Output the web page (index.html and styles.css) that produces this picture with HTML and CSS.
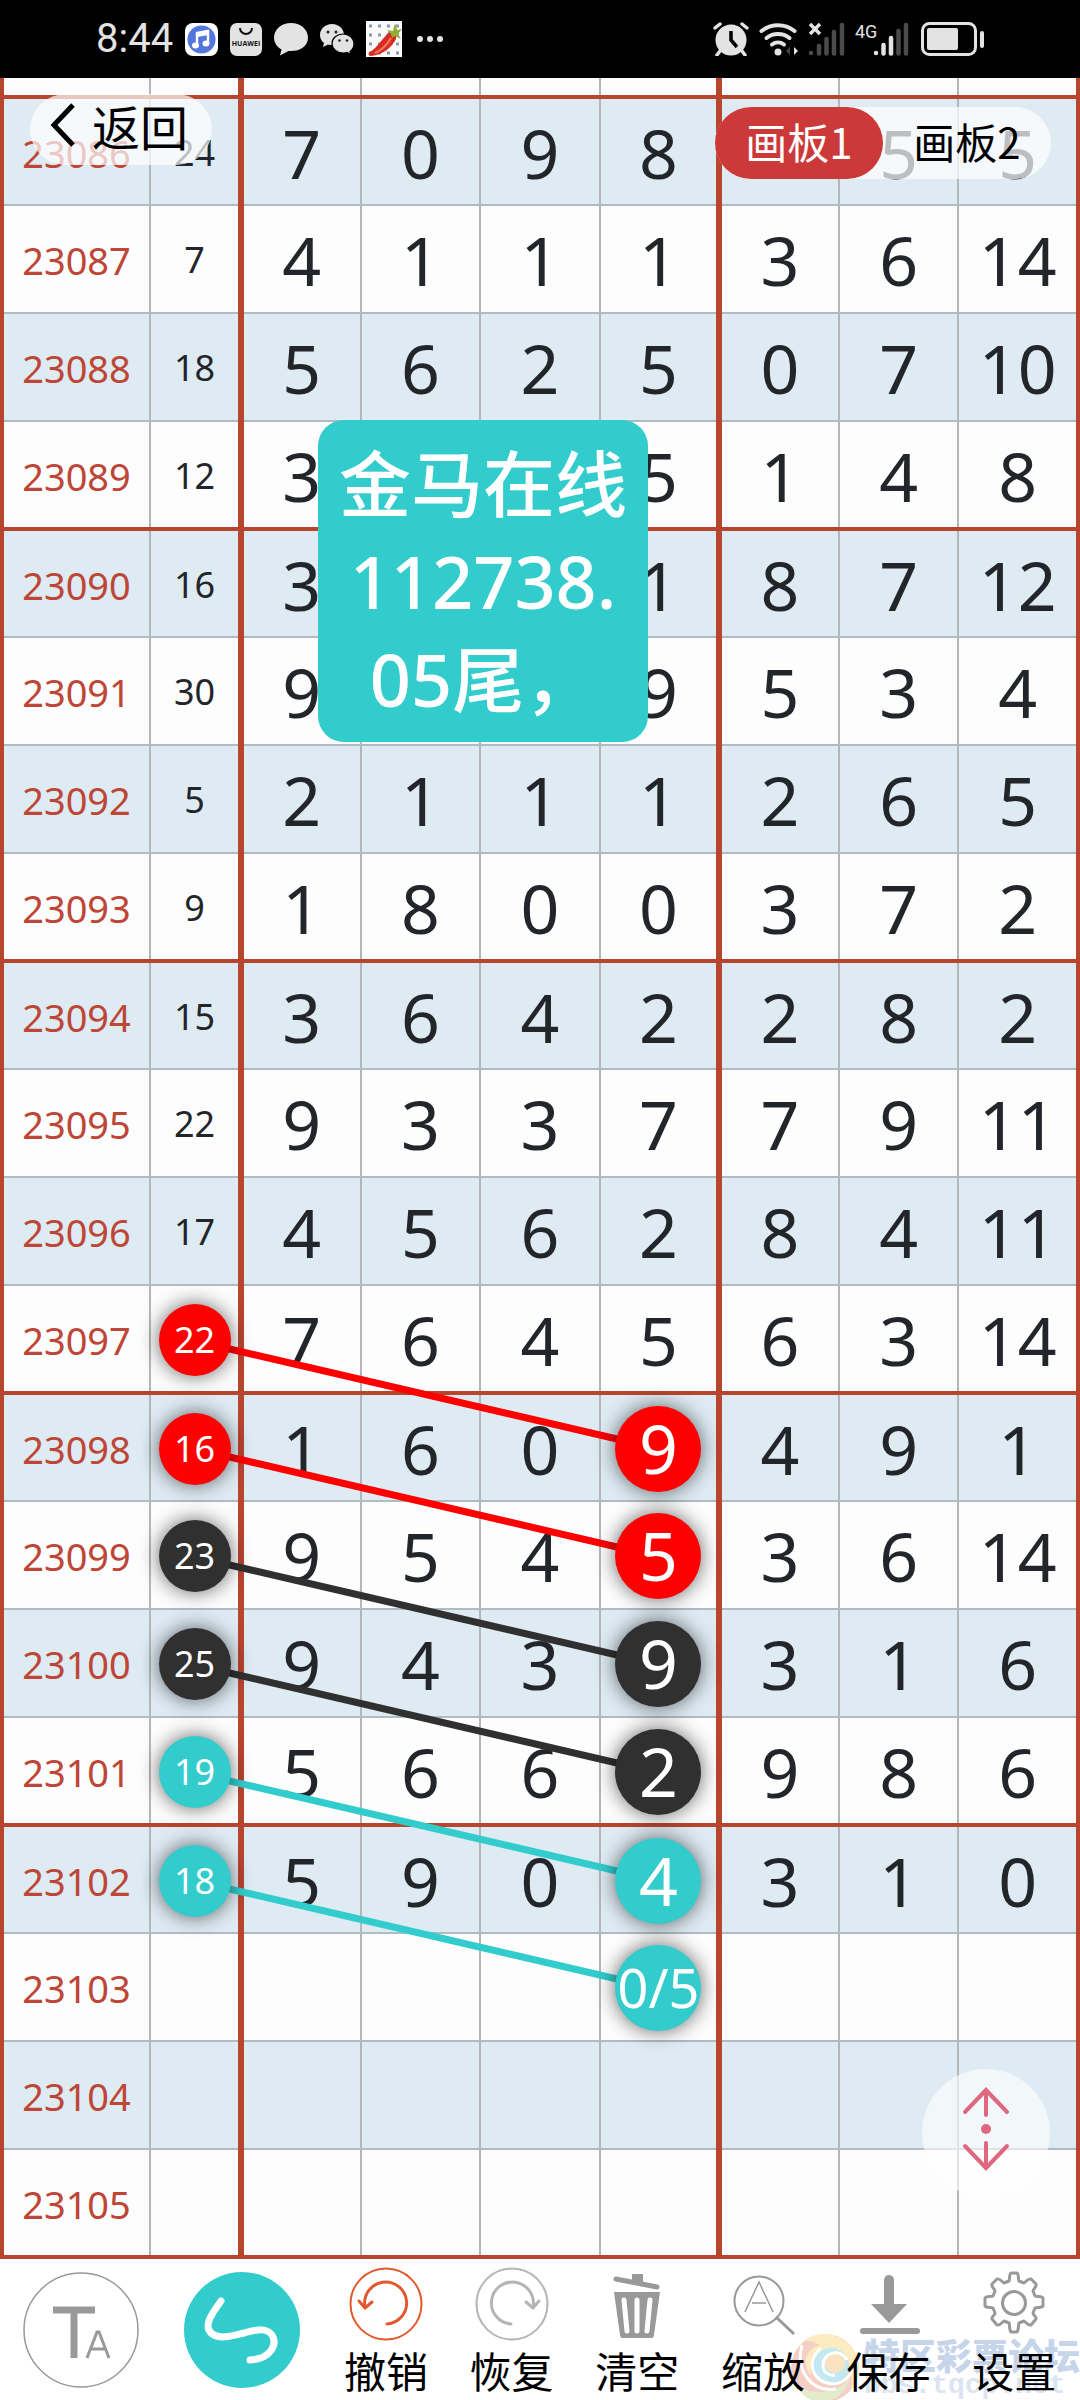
FILE: index.html
```html
<!DOCTYPE html>
<html lang="zh-CN">
<head>
  <meta charset="UTF-8">
  <meta name="viewport" content="width=device-width, initial-scale=1">
  <title>画板</title>
  <link rel="stylesheet" href="styles.css">
</head>
<body>

  <header class="status-bar">
    <div class="status-left">
      <span class="time">8:44</span>
      <svg width="33" height="33" viewBox="0 0 33 33">
        <rect width="33" height="33" rx="8" fill="#fff"/>
        <circle cx="16.500" cy="16.500" r="14" fill="#5377dc"/>
        <path d="M12 22V10l11-2v12" fill="none" stroke="#fff" stroke-width="2.400"/>
        <path d="M12 12.500l11-2" stroke="#fff" stroke-width="3"/>
        <ellipse cx="10.500" cy="22.500" rx="3.500" ry="3" fill="#fff"/>
        <ellipse cx="21" cy="20.500" rx="3.500" ry="3" fill="#fff"/>
      </svg>
      <svg width="32" height="33" viewBox="0 0 32 33">
        <rect width="32" height="33" rx="7" fill="#e3e3e3"/>
        <path d="M10 5a6 6 0 0 0 12 0" fill="none" stroke="#111" stroke-width="2"/>
        <text class="badge-text" x="16" y="23" text-anchor="middle">HUAWEI</text>
      </svg>
      <svg width="34" height="34" viewBox="0 0 34 34">
        <path d="M17 1C8 1 0 7 0 15.500c0 5 3 9.500 7.500 12L6 33.500l8.500-4.500C25 30 34 24.500 34 15.500 34 7 26 1 17 1z" fill="#e3e3e3"/>
      </svg>
      <svg width="34" height="32" viewBox="0 0 34 32">
        <path d="M12 1C5 1 0 6 0 12c0 3.500 1.500 6 4 8l-1 4 5-2.500c8 2 16-2 16-9.500C24 6 19 1 12 1z" fill="#e3e3e3"/>
        <path d="M23 11c-6 0-11 4-11 9.500S17 30 23 30c1.500 0 3 0 4-.500l4 2-1-3c2.500-2 4-4.500 4-8C34 15 29 11 23 11z" fill="#e3e3e3" stroke="#000" stroke-width="1.200"/>
        <g fill="#222"><circle cx="8" cy="9" r="1.500"/><circle cx="16" cy="9" r="1.500"/><circle cx="19.500" cy="17.500" r="1.300"/><circle cx="27" cy="17.500" r="1.300"/></g>
      </svg>
      <svg width="36" height="36" viewBox="0 0 36 36">
        <rect width="36" height="36" fill="#fafafa"/>
        <g fill="none" stroke="#8a9ab0" stroke-width="3" stroke-dasharray="3 6"><path d="M3 5h33M3 14h33M3 23h33M3 32h33"/></g>
        <path d="M23 11c5 0 8 3 7 7-4 8-13 16-25 17-3 0-3-3-1-4 8-5 12-13 19-20z" fill="#d62c22"/>
        <path d="M9 32c7-3 12-8 16-15" fill="none" stroke="#f47a62" stroke-width="2"/>
        <path d="M21 9l6 1 2-8 2 7 5-1-4 5 3 5-6-3-3 2-1-4z" fill="#8eae35"/>
      </svg>
      <svg width="36" height="8" viewBox="0 0 36 8">
        <g fill="#e3e3e3"><circle cx="6" cy="4" r="3"/><circle cx="16" cy="4" r="3"/><circle cx="26" cy="4" r="3"/></g>
      </svg>
    </div>
    <div class="status-right">
      <svg width="36" height="34" viewBox="0 0 36 34">
        <circle cx="18" cy="18" r="15.500" fill="#e3e3e3"/>
        <path d="M2 6l5-4M34 6l-5-4M7 29l-3 4M29 29l3 4" stroke="#e3e3e3" stroke-width="3.500" stroke-linecap="round"/>
        <path d="M18 9v9l6 7" fill="none" stroke="#000" stroke-width="3.500"/>
      </svg>
      <svg width="39" height="34" viewBox="0 0 39 34">
        <g fill="none" stroke="#e3e3e3" stroke-width="4" stroke-linecap="round">
          <path d="M2.500 9a27 27 0 0 1 33 0"/><path d="M7.500 16a19 19 0 0 1 23 0"/><path d="M13 22.500a10 10 0 0 1 12 0"/>
        </g>
        <circle cx="19" cy="30" r="3.500" fill="#e3e3e3"/>
        <path d="M31 25v8l-4-4z" fill="#444"/><path d="M35 25l4 4-4 4z" fill="#e3e3e3"/>
      </svg>
      <svg width="37" height="34" viewBox="0 0 37 34">
        <path d="M2 2l10 10M12 2l-10 10" stroke="#e3e3e3" stroke-width="3.500"/>
        <g stroke="#4b4b4b" stroke-width="4.500" stroke-linecap="round"><path d="M3 31v0M11 24v7.500M18.500 17v14.500M26 10v21.500M34 3v28.500"/></g>
      </svg>
      <svg width="56" height="34" viewBox="0 0 56 34">
        <text class="net-text" x="0" y="16">4G</text>
        <g stroke-width="4.500" stroke-linecap="round"><path d="M21 31v0M28.500 23v8.500M36 16v15.500" stroke="#e3e3e3"/><path d="M43.500 9v22.500M51 3v28.500" stroke="#4b4b4b"/></g>
      </svg>
      <svg width="63" height="34" viewBox="0 0 63 34">
        <rect x="1.500" y="1.500" width="53" height="31" rx="7" fill="none" stroke="#e3e3e3" stroke-width="3"/>
        <rect x="6" y="6" width="31" height="22" rx="2" fill="#e3e3e3"/>
        <rect x="59" y="9" width="4" height="17" rx="2" fill="#e3e3e3"/>
      </svg>
    </div>
  </header>

  <main class="board">
    <table class="chart">
      <colgroup>
        <col class="col-issue"><col class="col-sum">
        <col><col><col><col><col><col><col>
      </colgroup>
      <tbody>
        <tr class="cut group-end"><th></th><td></td><td></td><td></td><td></td><td></td><td></td><td></td><td></td></tr>
        <tr><th scope="row">23086</th><td>24</td><td>7</td><td>0</td><td>9</td><td>8</td><td></td><td>5</td><td>5</td></tr>
        <tr><th scope="row">23087</th><td>7</td><td>4</td><td>1</td><td>1</td><td>1</td><td>3</td><td>6</td><td>14</td></tr>
        <tr><th scope="row">23088</th><td>18</td><td>5</td><td>6</td><td>2</td><td>5</td><td>0</td><td>7</td><td>10</td></tr>
        <tr class="group-end"><th scope="row">23089</th><td>12</td><td>3</td><td></td><td></td><td>5</td><td>1</td><td>4</td><td>8</td></tr>
        <tr><th scope="row">23090</th><td>16</td><td>3</td><td></td><td></td><td>1</td><td>8</td><td>7</td><td>12</td></tr>
        <tr><th scope="row">23091</th><td>30</td><td>9</td><td></td><td></td><td>9</td><td>5</td><td>3</td><td>4</td></tr>
        <tr><th scope="row">23092</th><td>5</td><td>2</td><td>1</td><td>1</td><td>1</td><td>2</td><td>6</td><td>5</td></tr>
        <tr class="group-end"><th scope="row">23093</th><td>9</td><td>1</td><td>8</td><td>0</td><td>0</td><td>3</td><td>7</td><td>2</td></tr>
        <tr><th scope="row">23094</th><td>15</td><td>3</td><td>6</td><td>4</td><td>2</td><td>2</td><td>8</td><td>2</td></tr>
        <tr><th scope="row">23095</th><td>22</td><td>9</td><td>3</td><td>3</td><td>7</td><td>7</td><td>9</td><td>11</td></tr>
        <tr><th scope="row">23096</th><td>17</td><td>4</td><td>5</td><td>6</td><td>2</td><td>8</td><td>4</td><td>11</td></tr>
        <tr class="group-end"><th scope="row">23097</th><td><span class="ball small red">22</span></td><td>7</td><td>6</td><td>4</td><td>5</td><td>6</td><td>3</td><td>14</td></tr>
        <tr><th scope="row">23098</th><td><span class="ball small red">16</span></td><td>1</td><td>6</td><td>0</td><td><span class="ball red">9</span></td><td>4</td><td>9</td><td>1</td></tr>
        <tr><th scope="row">23099</th><td><span class="ball small black">23</span></td><td>9</td><td>5</td><td>4</td><td><span class="ball red">5</span></td><td>3</td><td>6</td><td>14</td></tr>
        <tr><th scope="row">23100</th><td><span class="ball small black">25</span></td><td>9</td><td>4</td><td>3</td><td><span class="ball black">9</span></td><td>3</td><td>1</td><td>6</td></tr>
        <tr class="group-end"><th scope="row">23101</th><td><span class="ball small teal">19</span></td><td>5</td><td>6</td><td>6</td><td><span class="ball black">2</span></td><td>9</td><td>8</td><td>6</td></tr>
        <tr><th scope="row">23102</th><td><span class="ball small teal">18</span></td><td>5</td><td>9</td><td>0</td><td><span class="ball teal">4</span></td><td>3</td><td>1</td><td>0</td></tr>
        <tr><th scope="row">23103</th><td></td><td></td><td></td><td></td><td><span class="ball teal pair">0/5</span></td><td></td><td></td><td></td></tr>
        <tr><th scope="row">23104</th><td></td><td></td><td></td><td></td><td></td><td></td><td></td><td></td></tr>
        <tr class="group-end"><th scope="row">23105</th><td></td><td></td><td></td><td></td><td></td><td></td><td></td><td></td></tr>
      </tbody>
    </table>

    <!-- trend lines, one unit per pixel of the chart -->
    <svg class="lines" viewBox="0 0 1080 2181" preserveAspectRatio="none">
      <g fill="none" stroke-width="7">
        <path d="M195 1263L660 1371M195 1371L660 1479" stroke="#ff0000"/>
        <path d="M195 1479L660 1587M195 1587L660 1695" stroke="#303030"/>
        <path d="M195 1695L660 1803M195 1803L660 1911" stroke="#32cccd"/>
      </g>
    </svg>

    <div class="note">金马在线<br>112738.<br>05尾，</div>

    <button class="back" type="button">
      <svg width="26" height="46" viewBox="0 0 26 46"><path d="M23 3L4 23l19 20" fill="none" stroke="#000" stroke-width="5"/></svg>
      返回
    </button>

    <div class="boards">
      <button class="active" type="button">画板1</button>
      <button type="button">画板2</button>
    </div>

    <button class="scroller" type="button" aria-label="滚动">
      <svg width="48" height="84" viewBox="0 0 48 84">
        <g fill="none" stroke="#dd6880" stroke-width="4" stroke-linecap="round">
          <path d="M3 25L24 3l21 22M24 3v25M3 59l21 22 21-22M24 81V56"/>
        </g>
        <circle cx="24" cy="42" r="5" fill="#dd6880"/>
      </svg>
    </button>
  </main>

  <footer class="toolbar">
    <button class="mode" type="button" aria-label="文字">
      <svg width="116" height="116" viewBox="0 0 116 116">
        <circle cx="58" cy="58" r="57" fill="#fff" stroke="#999" stroke-width="1.500"/>
        <path d="M30 38h42M51 38v48" fill="none" stroke="#999" stroke-width="7"/>
        <path d="M64 86l10-26h2l10 26M67 77h16" fill="none" stroke="#999" stroke-width="3"/>
      </svg>
    </button>
    <button class="mode" type="button" aria-label="画线">
      <svg width="116" height="116" viewBox="0 0 116 116">
        <circle cx="58" cy="58" r="58" fill="#32cccd"/>
        <path d="M37 29C26 44 20 54 27 61c8 7 21 3 33 0 14-4 23-5 28 2 6 10-2 24-22 25" fill="none" stroke="#fff" stroke-width="7" stroke-linecap="round"/>
      </svg>
    </button>
    <button class="tool" type="button">
      <svg width="74" height="74" viewBox="0 0 74 74">
        <g fill="none" stroke="#e2582f" stroke-width="2" stroke-linecap="round" stroke-linejoin="round">
          <circle cx="37" cy="37" r="35.500"/>
          <path d="M38 57a21 21 0 1 0-22-17" stroke-width="3"/><path d="M10 34l6 7 7-6" stroke-width="3"/>
        </g>
      </svg>
      撤销
    </button>
    <button class="tool" type="button">
      <svg width="74" height="74" viewBox="0 0 74 74">
        <g fill="none" stroke="#b5b5b5" stroke-width="2" stroke-linecap="round" stroke-linejoin="round">
          <circle cx="37" cy="37" r="35.500"/>
          <path d="M36 57a21 21 0 1 1 22-17" stroke-width="3"/><path d="M64 34l-6 7-7-6" stroke-width="3"/>
        </g>
      </svg>
      恢复
    </button>
    <button class="tool" type="button">
      <svg width="74" height="74" viewBox="0 0 74 74">
        <path d="M16 12l41 8" stroke="#999" stroke-width="5" stroke-linecap="round"/>
        <path d="M32 7h11v9l-11-2z" fill="#999"/>
        <path d="M14 25h46l-6 43q0 3-3 3H23q-3 0-3-3z" fill="#999"/>
        <path d="M24 33l3 31M37 33v31M50 33l-3 31" stroke="#fff" stroke-width="5" stroke-linecap="round"/>
      </svg>
      清空
    </button>
    <button class="tool" type="button">
      <svg width="74" height="74" viewBox="0 0 74 74">
        <g fill="none" stroke="#999" stroke-width="2">
          <circle cx="33" cy="34" r="24.500"/>
          <path d="M19 45l14-30 14 30M26 36h14" stroke-width="1.500"/><path d="M50 50l18 17" stroke-width="3"/>
        </g>
      </svg>
      缩放
    </button>
    <button class="tool" type="button">
      <svg width="74" height="74" viewBox="0 0 74 74">
        <path d="M37 13v30" stroke="#999" stroke-width="10" stroke-linecap="round"/>
        <path d="M19 37h36L37 56z" fill="#999"/>
        <path d="M11 64h54" stroke="#999" stroke-width="6" stroke-linecap="round"/>
      </svg>
      保存
    </button>
    <button class="tool" type="button">
      <svg width="74" height="74" viewBox="0 0 74 74">
        <g transform="translate(2 0)" fill="none" stroke="#999" stroke-width="3" stroke-linejoin="round">
          <circle cx="35" cy="36" r="11.500"/>
          <path d="M30 14c1-2 0-7 2-8h6c2 1 1 6 2 8l5 2c2-1 4-5 7-4l5 5c1 3-3 5-3 7l2 5c2 1 7 0 8 2v8c-1 2-6 1-8 2l-2 5c0 2 4 4 3 6l-5 6c-3 1-5-3-7-4l-5 2c-1 2 0 7-2 9h-6c-2-2-1-7-2-9l-5-2c-2 1-4 5-7 4l-5-6c-1-2 3-4 3-6l-2-5c-2-1-7 0-8-2v-8c1-2 6-1 8-2l2-5c0-2-4-4-3-7l5-5c3-1 5 3 7 4z"/>
        </g>
      </svg>
      设置
    </button>

    <div class="forum">
      <svg width="70" height="70" viewBox="0 0 70 70">
        <circle cx="35" cy="35" r="34" fill="#f0b6a8"/>
        <path d="M14 8C30-5 58 0 67 24c4 14 0 25-6 33C66 36 52 20 37 20c-14 0-20 14-15 24C10 30 16 16 30 12 22 8 18 7 14 8z" fill="#fbe2a0"/>
        <path d="M6 52c18 12 44 8 54-8-3 16-18 26-30 25-12-1-20-9-24-17z" fill="#d3e3b0"/>
        <circle cx="41" cy="33" r="18" fill="#a5dcea"/>
        <circle cx="45" cy="30" r="10" fill="#f9d5a0"/>
        <path d="M12 12C5 38 22 60 46 56M31 15C14 30 24 50 42 51c11 0 20-8 20-18M57 27c-6-12-24-8-24 5 0 8 6 11 12 10" fill="none" stroke="#fff" stroke-width="3"/>
      </svg>
      <div>
        <strong>特区彩票论坛</strong>
        <span>bbs.tqcp.net</span>
      </div>
    </div>
  </footer>

</body>
</html>
```
FILE: styles.css
```css
* {
  box-sizing: border-box;
}

body {
  margin: 0;
  background: #fff;
  color: #22252a;
  font-family: "Noto Sans", "Noto Sans CJK SC", sans-serif;
}

button {
  margin: 0;
  padding: 0;
  border: none;
  background: none;
  color: #000;
  font-family: "Noto Sans CJK SC", sans-serif;
  cursor: pointer;
}

svg {
  display: block;
  flex: none;
}

/* status bar */
.status-bar {
  display: flex;
  justify-content: space-between;
  align-items: center;
  height: 78px;
  padding: 0 96px;
  background: #000;
  color: #e3e3e3;
}

.status-left,
.status-right {
  display: flex;
  align-items: center;
  gap: 12px;
}

.status-right {
  gap: 10px;
}

.time {
  font-family: Roboto, sans-serif;
  font-size: 40px;
  line-height: 48px;
}

.badge-text {
  font-family: "Open Sans", sans-serif;
  font-size: 7px;
  font-weight: bold;
  fill: #111;
}

.net-text {
  font-family: Roboto, sans-serif;
  font-size: 18px;
  fill: #e3e3e3;
}

/* chart */
.board {
  position: relative;
}

.chart {
  width: 100%;
  table-layout: fixed;
  border-collapse: collapse;
  border-left: 4px solid #b8452e;
  border-right: 4px solid #b8452e;
}

.col-issue {
  width: 148px;
}

.col-sum {
  width: 91px;
}

.chart tr {
  height: 108px;
  background: #fdfdfd;
}

.chart tr:nth-child(even) {
  background: #deebf3;
}

.chart tr.cut {
  height: 19px;
}

.chart th,
.chart td {
  padding: 2px 0 0;
  border-right: 2px solid #b3b7ba;
  border-bottom: 2px solid #aebdc2;
  text-align: center;
  vertical-align: middle;
  font-size: 68px;
  font-weight: normal;
  line-height: 80px;
}

.chart .cut th,
.chart .cut td {
  font-size: 0;
  line-height: 0;
}

.chart th {
  color: #bd4636;
  font-size: 38px;
}

.chart td:nth-child(2) {
  border-right: 6px solid #b8452e;
  font-size: 36px;
}

.chart td:nth-child(6) {
  border-right: 6px solid #b8452e;
}

.chart td:last-child {
  border-right: 4px solid #b8452e;
}

.chart .group-end th,
.chart .group-end td {
  border-bottom: 4px solid #b8452e;
}

.ball {
  position: relative;
  z-index: 2;
  display: block;
  width: 86px;
  height: 86px;
  margin: 0 auto;
  border-radius: 50%;
  box-shadow: 0 0 20px rgba(0, 0, 0, 0.6);
  color: #fff;
  line-height: 84px;
}

.ball.small {
  width: 72px;
  height: 72px;
  line-height: 72px;
}

.ball.pair {
  font-size: 54px;
}

.red {
  background: #ff0000;
}

.black {
  background: #303030;
}

.teal {
  background: #32cccd;
}

.lines {
  position: absolute;
  top: 0;
  left: 0;
  z-index: 1;
  width: 100%;
  height: 100%;
  pointer-events: none;
}

/* things floating over the chart */
.note {
  position: absolute;
  top: 342px;
  left: 318px;
  z-index: 3;
  width: 330px;
  padding: 14px 0;
  border-radius: 26px;
  background: #32cccd;
  color: #fff;
  font-size: 72px;
  font-weight: 500;
  line-height: 98px;
  text-align: center;
}

.back {
  position: absolute;
  top: 16px;
  left: 30px;
  z-index: 3;
  display: flex;
  align-items: center;
  gap: 16px;
  height: 71px;
  padding: 0 24px 10px 20px;
  border-radius: 36px;
  background: rgba(255, 255, 255, 0.7);
  font-size: 48px;
  line-height: 60px;
}

.boards {
  position: absolute;
  top: 29px;
  right: 29px;
  z-index: 3;
  display: flex;
  border-radius: 36px;
  background: rgba(255, 255, 255, 0.7);
}

.boards button {
  width: 168px;
  height: 72px;
  padding-bottom: 6px;
  border-radius: 36px;
  font-size: 42px;
}

.boards .active {
  background: #cb3938;
  color: #fff;
}

.scroller {
  position: absolute;
  right: 30px;
  bottom: 62px;
  z-index: 3;
  display: flex;
  justify-content: center;
  padding-top: 18px;
  width: 128px;
  height: 128px;
  border-radius: 50%;
  background: rgba(255, 255, 255, 0.6);
}

/* toolbar */
.toolbar {
  position: relative;
  display: flex;
  height: 141px;
  padding-right: 3px;
  overflow: hidden;
}

.mode {
  display: flex;
  justify-content: center;
  align-items: center;
  width: 15%;
}

.tool {
  position: relative;
  z-index: 1;
  display: flex;
  flex: 1;
  flex-direction: column;
  align-items: center;
  padding-top: 8px;
  font-size: 42px;
  line-height: 58px;
}

.forum {
  position: absolute;
  right: 0;
  bottom: -3px;
  display: flex;
  align-items: center;
  gap: 4px;
  opacity: 0.65;
}

.forum div {
  display: flex;
  flex-direction: column;
}

.forum strong {
  color: #a9bfdf;
  font-family: "Noto Sans CJK SC", sans-serif;
  font-size: 36px;
  font-weight: 900;
  line-height: 36px;
}

.forum span {
  color: #c9d6ea;
  font-family: "Liberation Mono", monospace;
  font-size: 28px;
  font-weight: bold;
  line-height: 28px;
}
```
